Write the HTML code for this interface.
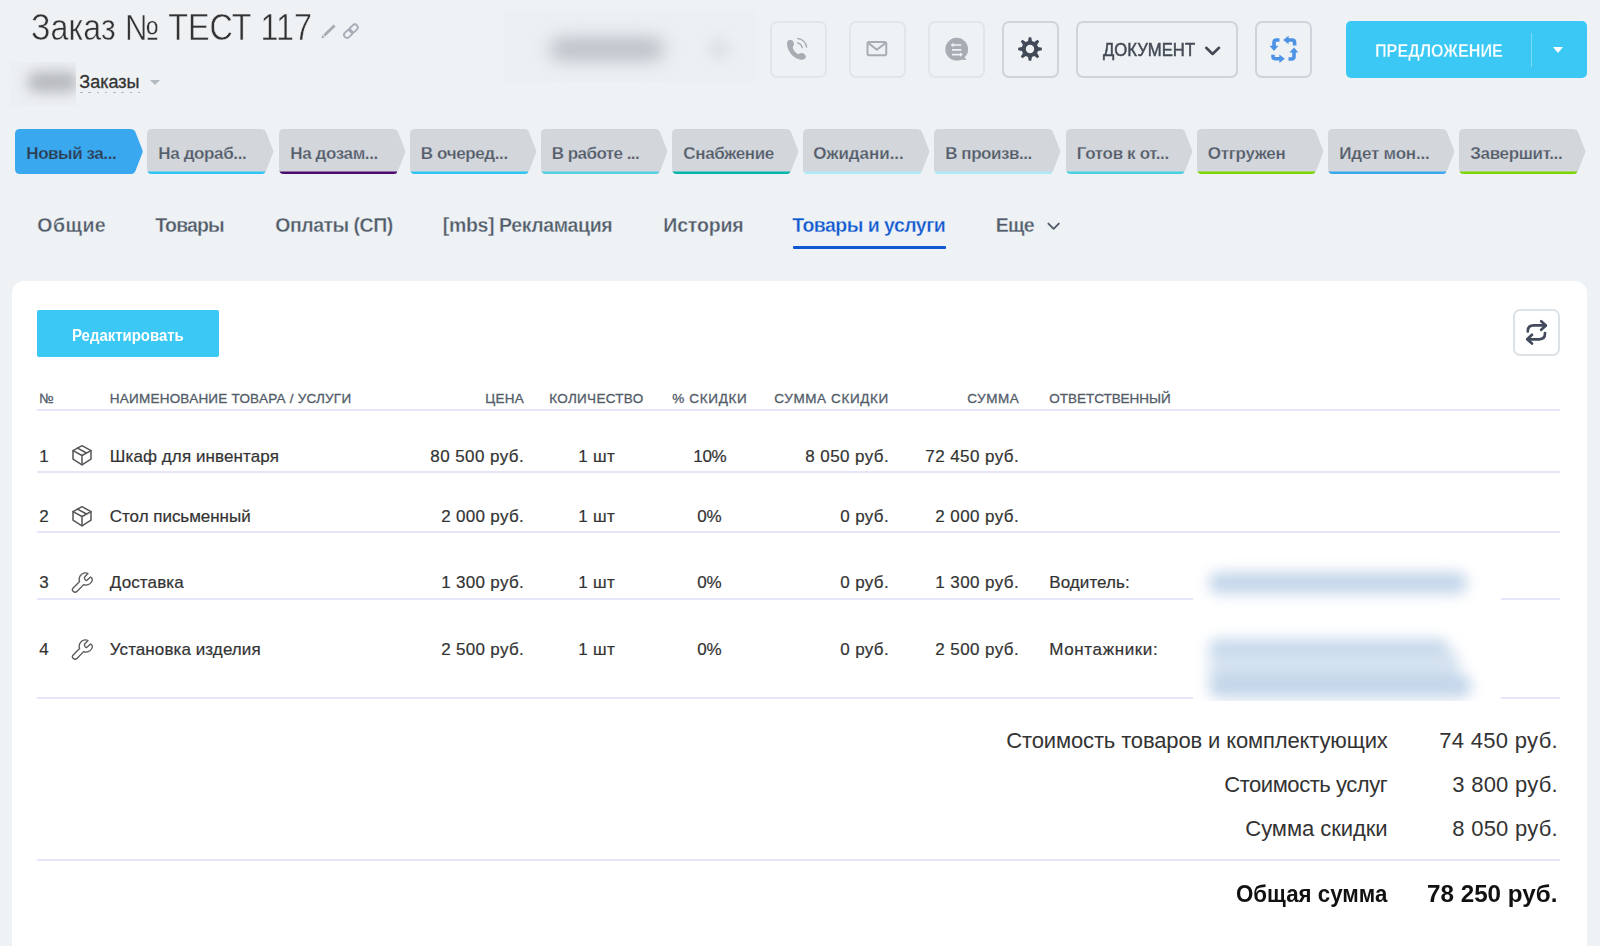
<!DOCTYPE html>
<html lang="ru">
<head>
<meta charset="utf-8">
<title>Заказ № ТЕСТ 117</title>
<style>
*{box-sizing:border-box;margin:0;padding:0}
html,body{width:1600px;height:946px;overflow:hidden}
body{background:#eef2f5;font-family:"Liberation Sans",sans-serif;color:#333;position:relative}
.abs{position:absolute}
.tx{white-space:nowrap}
.title{font-size:36.5px;line-height:44px;color:#333;-webkit-text-stroke:0.5px #eef2f5;margin-top:1px}
.sub{font-size:18px;line-height:24px;color:#333;-webkit-text-stroke:0.3px #333}
.subline{left:80px;top:92px;width:60px;height:1.4px;background:repeating-linear-gradient(90deg,#b3b7bd 0,#b3b7bd 2.6px,transparent 2.6px,transparent 8.3px)}
.blur1{left:28px;top:66px;width:48px;height:30px;background:#c3c6ca;filter:blur(6px);border-radius:10px;opacity:.8}
.caret{left:150px;top:80px;width:0;height:0;border:5px solid transparent;border-top:5px solid #b4bac1}
.hb{top:21px;height:57px;border:2px solid #e2e6ea;border-radius:7px}
.hb.d{border-color:#cfd4db}
.doct{font-size:17.5px;line-height:22px;color:#434a54;-webkit-text-stroke:0.45px #434a54}
.prim{left:1346px;top:21px;width:241px;height:57px;background:#3bc8f5;border-radius:5px}
.prim i{position:absolute;left:185px;top:12px;width:1px;height:34px;background:#7bdaf8}
.prim b{position:absolute;left:207px;top:26px;width:0;height:0;border:5.5px solid transparent;border-top:6px solid #fff}
.primt{font-size:17.5px;line-height:22px;color:#fff;font-weight:bold;-webkit-text-stroke:0.3px #3bc8f5}
.blurbox{left:505px;top:14px;width:250px;height:70px;background:#ecf0f3;filter:blur(4px)}
.blurtxt{left:548px;top:38px;width:115px;height:22px;background:#c5cad0;filter:blur(7px);border-radius:11px}
.blurtxt2{left:705px;top:36px;width:30px;height:22px;background:#e2e6ea;filter:blur(6px);border-radius:11px}
.stage{top:129px;height:45px;width:129px}
.stage svg{position:absolute;left:0;top:0}
.stg{font-size:17px;line-height:22px;font-weight:bold;color:#535c69;margin-top:0.4px;-webkit-text-stroke:0.25px #d3d7dc}
.stg.first{color:#2d3c4d;-webkit-text-stroke:0.25px #39a8ef}
.tab{font-size:19.5px;line-height:28px;margin-top:-0.4px;font-weight:bold;color:#525c69;-webkit-text-stroke:0.3px #eef2f5}
.tab.act{color:#1058d0}
.tabline{left:793px;top:246px;width:153px;height:3px;background:#1058d0;border-radius:1px}
.panel{left:12px;top:281px;width:1575px;height:700px;background:#fff;border-radius:12px}
.edit{left:37px;top:310px;width:182px;height:47.4px;background:#3bc8f5;border-radius:2px}
.editt{color:#fff;font-weight:bold;font-size:16px;line-height:20px;margin-top:1px}
.rbtn{left:1513px;top:309px;width:47px;height:47px;border:2px solid #dde2e7;border-radius:7px;background:#fff}
.rbtn svg{position:absolute;left:10px;top:9px}
.th{font-size:13.5px;line-height:16px;color:#525c69;text-transform:uppercase;-webkit-text-stroke:0.3px #525c69}
.hl{left:37px;width:1523px;height:2px;background:#e6e6fa}
.td{font-size:17px;line-height:22px;color:#333;margin-top:1.2px;-webkit-text-stroke:0.2px #333}
.tot{font-size:22px;line-height:26px;color:#333}
.tot.b{font-weight:bold;color:#111;font-size:23.5px}
</style>
</head>
<body>
<svg class="abs" style="left:316px;top:20px" width="48" height="24" viewBox="316 20 48 24"><g stroke="#a7adb4" fill="none" stroke-linecap="butt"><line x1="324.2" y1="35.4" x2="334.6" y2="25.4" stroke-width="2.8"/><path d="M321.4,38.2 L322.3,35 L324.8,37.4 Z" fill="#a7adb4" stroke="none"/><rect x="-4.6" y="-3" width="9.2" height="6" rx="3" transform="translate(348.2,33.8) rotate(-43)" stroke-width="1.8"/><rect x="-4.6" y="-3" width="9.2" height="6" rx="3" transform="translate(353.6,28.6) rotate(-43)" stroke-width="1.8"/></g></svg>
<div class="abs" style="left:10px;top:62px;width:66.4px;height:44px;background:#edf0f3;overflow:hidden"><div class="abs" style="left:18px;top:10px;width:50px;height:20px;background:#b4b7bb;filter:blur(7px);border-radius:8px"></div></div>
<div class="abs subline"></div>
<div class="abs caret"></div>

<div class="abs" style="left:505px;top:9.5px;width:252px;height:72px;background:#ecf0f3;overflow:hidden"><div class="abs" style="left:45px;top:28px;width:114px;height:22px;background:#b9bec5;filter:blur(9px);border-radius:11px"></div><div class="abs" style="left:203px;top:28px;width:22px;height:22px;background:#dfe3e7;filter:blur(6px);border-radius:11px"></div></div>

<div class="abs hb" style="left:770px;width:57px"></div>
<svg class="abs" style="left:785px;top:37px" width="24" height="24" viewBox="785 37 24 24"><path d="M790.4,39.8 C788.5,39.8 787,41.5 787,43.5 C787,51 793,58.5 801,59.8 C803.5,60.2 806,58.5 806,56.5 C806,55 804,53.5 802.2,53 C800.5,52.6 799.5,53.8 798,54 C795.5,53 793,49.5 792.8,47.5 C792.8,46.3 794,45.5 794,44 C794,42 792.5,39.8 790.4,39.8 Z" fill="#a8adb4"/><path d="M797.8,38.6 A10.2,10.2 0 0 1 806.6,47 M797.6,42.9 A6,6 0 0 1 802.2,47.4" fill="none" stroke="#a8adb4" stroke-width="1.5" stroke-linecap="round"/></svg>
<div class="abs hb" style="left:849px;width:57px"></div>
<svg class="abs" style="left:865px;top:39px" width="24" height="20" viewBox="865 39 24 20"><rect x="867.5" y="42" width="18.8" height="13.2" rx="1.8" fill="none" stroke="#a8adb4" stroke-width="2"/><path d="M867.8,42.6 L876.9,49.8 L886,42.6" fill="none" stroke="#a8adb4" stroke-width="2" stroke-linejoin="round"/></svg>
<div class="abs hb" style="left:928px;width:57px"></div>
<svg class="abs" style="left:944px;top:37px" width="26" height="26" viewBox="944 37 26 26"><circle cx="956.7" cy="49.2" r="11.4" fill="#a8adb4"/><path d="M962,55 L966.8,60 L960,59.5 Z" fill="#a8adb4"/><g stroke="#eef2f5" stroke-width="1.7" fill="none"><path d="M952.6,45 H961.2 M952,49.8 H961.4 M952,54.6 H960.6"/></g><path d="M950.6,45 L953.6,42.8 V47.2 Z M963,54.6 L960,52.4 V56.8 Z" fill="#eef2f5"/></svg>
<div class="abs hb d" style="left:1002px;width:57px"></div>
<svg class="abs" style="left:1017.2px;top:36.4px" width="26" height="26" viewBox="1017.2 36.4 26 26"><path fill-rule="evenodd" d="M1028.23,41.34 L1029.01,37.56 L1031.39,37.56 L1032.17,41.34 L1034.51,42.30 L1037.73,40.19 L1039.41,41.87 L1037.30,45.09 L1038.26,47.43 L1042.04,48.21 L1042.04,50.59 L1038.26,51.37 L1037.30,53.71 L1039.41,56.93 L1037.73,58.61 L1034.51,56.50 L1032.17,57.46 L1031.39,61.24 L1029.01,61.24 L1028.23,57.46 L1025.89,56.50 L1022.67,58.61 L1020.99,56.93 L1023.10,53.71 L1022.14,51.37 L1018.36,50.59 L1018.36,48.21 L1022.14,47.43 L1023.10,45.09 L1020.99,41.87 L1022.67,40.19 L1025.89,42.30 Z M1034.40,49.4 A4.2,4.2 0 1 0 1026.00,49.4 A4.2,4.2 0 1 0 1034.40,49.4 Z" fill="#424a57"/></svg>
<div class="abs hb d" style="left:1076px;width:162px"></div>
<div class="abs hb d" style="left:1255px;width:57px"></div>
<svg class="abs" style="left:1269px;top:35px" width="30" height="28" viewBox="1269 35 30 28"><g fill="none" stroke="#4c93e6" stroke-width="3.6"><path d="M1279.5,40 H1276.5 Q1274,40 1274,42.5 V46.5"/><path d="M1288,40 H1292 Q1294.6,40 1294.6,42.5 V45.5"/><path d="M1294,52 V56.5 Q1294,59 1291.5,59 H1288.5"/><path d="M1273,54.8 V56.5 Q1273,58.8 1275.5,58.8 H1280"/></g><g fill="#4c93e6"><path d="M1269.6,45.8 H1278.4 L1274,51 Z"/><path d="M1288.6,35.8 V44.2 L1283.2,40 Z"/><path d="M1289.4,52.6 H1298.4 L1294,47.6 Z"/><path d="M1279.4,54.6 V63 L1284.8,58.8 Z"/></g></svg>
<svg class="abs" style="left:1202px;top:44px" width="22" height="14" viewBox="1202 44 22 14"><path d="M1206.2,47.8 L1212.6,54 L1219,47.8" fill="none" stroke="#434a54" stroke-width="2.6" stroke-linecap="round" stroke-linejoin="round"/></svg>
<div class="abs prim"><i></i><b></b></div>

<div class="abs stage" style="left:15.3px"><svg width="129" height="45" viewBox="0 0 129 45"><path d="M5,0 H116 Q119,0 120.2,2.6 L127.4,21 Q128,22.5 127.4,24 L120.2,42.4 Q119,45 116,45 H5 Q0,45 0,40 V5 Q0,0 5,0 Z" fill="#39a8ef"/></svg></div>
<div class="abs stage" style="left:147px"><svg width="129" height="45" viewBox="0 0 129 45"><defs><clipPath id="sc1"><path d="M5,0 H114.6 Q117.6,0 118.8,2.6 L126,21 Q126.6,22.5 126,24 L118.8,42.4 Q117.6,45 114.6,45 H5 Q0,45 0,40 V5 Q0,0 5,0 Z"/></clipPath></defs><path d="M5,0 H114.6 Q117.6,0 118.8,2.6 L126,21 Q126.6,22.5 126,24 L118.8,42.4 Q117.6,45 114.6,45 H5 Q0,45 0,40 V5 Q0,0 5,0 Z" fill="#d3d7dc"/><rect x="0" y="42.5" width="118" height="3" fill="#2fc6f6" clip-path="url(#sc1)"/></svg></div>
<div class="abs stage" style="left:278.5px"><svg width="129" height="45" viewBox="0 0 129 45"><defs><clipPath id="sc2"><path d="M5,0 H114.6 Q117.6,0 118.8,2.6 L126,21 Q126.6,22.5 126,24 L118.8,42.4 Q117.6,45 114.6,45 H5 Q0,45 0,40 V5 Q0,0 5,0 Z"/></clipPath></defs><path d="M5,0 H114.6 Q117.6,0 118.8,2.6 L126,21 Q126.6,22.5 126,24 L118.8,42.4 Q117.6,45 114.6,45 H5 Q0,45 0,40 V5 Q0,0 5,0 Z" fill="#d3d7dc"/><rect x="0" y="42.5" width="118" height="3" fill="#4b0a6e" clip-path="url(#sc2)"/></svg></div>
<div class="abs stage" style="left:409.5px"><svg width="129" height="45" viewBox="0 0 129 45"><defs><clipPath id="sc3"><path d="M5,0 H114.6 Q117.6,0 118.8,2.6 L126,21 Q126.6,22.5 126,24 L118.8,42.4 Q117.6,45 114.6,45 H5 Q0,45 0,40 V5 Q0,0 5,0 Z"/></clipPath></defs><path d="M5,0 H114.6 Q117.6,0 118.8,2.6 L126,21 Q126.6,22.5 126,24 L118.8,42.4 Q117.6,45 114.6,45 H5 Q0,45 0,40 V5 Q0,0 5,0 Z" fill="#d3d7dc"/><rect x="0" y="42.5" width="118" height="3" fill="#2fc6f6" clip-path="url(#sc3)"/></svg></div>
<div class="abs stage" style="left:540.5px"><svg width="129" height="45" viewBox="0 0 129 45"><defs><clipPath id="sc4"><path d="M5,0 H114.6 Q117.6,0 118.8,2.6 L126,21 Q126.6,22.5 126,24 L118.8,42.4 Q117.6,45 114.6,45 H5 Q0,45 0,40 V5 Q0,0 5,0 Z"/></clipPath></defs><path d="M5,0 H114.6 Q117.6,0 118.8,2.6 L126,21 Q126.6,22.5 126,24 L118.8,42.4 Q117.6,45 114.6,45 H5 Q0,45 0,40 V5 Q0,0 5,0 Z" fill="#d3d7dc"/><rect x="0" y="42.5" width="118" height="3" fill="#55d0e0" clip-path="url(#sc4)"/></svg></div>
<div class="abs stage" style="left:672px"><svg width="129" height="45" viewBox="0 0 129 45"><defs><clipPath id="sc5"><path d="M5,0 H114.6 Q117.6,0 118.8,2.6 L126,21 Q126.6,22.5 126,24 L118.8,42.4 Q117.6,45 114.6,45 H5 Q0,45 0,40 V5 Q0,0 5,0 Z"/></clipPath></defs><path d="M5,0 H114.6 Q117.6,0 118.8,2.6 L126,21 Q126.6,22.5 126,24 L118.8,42.4 Q117.6,45 114.6,45 H5 Q0,45 0,40 V5 Q0,0 5,0 Z" fill="#d3d7dc"/><rect x="0" y="42.5" width="118" height="3" fill="#05b5ab" clip-path="url(#sc5)"/></svg></div>
<div class="abs stage" style="left:802.5px"><svg width="129" height="45" viewBox="0 0 129 45"><defs><clipPath id="sc6"><path d="M5,0 H114.6 Q117.6,0 118.8,2.6 L126,21 Q126.6,22.5 126,24 L118.8,42.4 Q117.6,45 114.6,45 H5 Q0,45 0,40 V5 Q0,0 5,0 Z"/></clipPath></defs><path d="M5,0 H114.6 Q117.6,0 118.8,2.6 L126,21 Q126.6,22.5 126,24 L118.8,42.4 Q117.6,45 114.6,45 H5 Q0,45 0,40 V5 Q0,0 5,0 Z" fill="#d3d7dc"/><rect x="0" y="42.5" width="118" height="3" fill="#ace9fb" clip-path="url(#sc6)"/></svg></div>
<div class="abs stage" style="left:934px"><svg width="129" height="45" viewBox="0 0 129 45"><defs><clipPath id="sc7"><path d="M5,0 H114.6 Q117.6,0 118.8,2.6 L126,21 Q126.6,22.5 126,24 L118.8,42.4 Q117.6,45 114.6,45 H5 Q0,45 0,40 V5 Q0,0 5,0 Z"/></clipPath></defs><path d="M5,0 H114.6 Q117.6,0 118.8,2.6 L126,21 Q126.6,22.5 126,24 L118.8,42.4 Q117.6,45 114.6,45 H5 Q0,45 0,40 V5 Q0,0 5,0 Z" fill="#d3d7dc"/><rect x="0" y="42.5" width="118" height="3" fill="#ace9fb" clip-path="url(#sc7)"/></svg></div>
<div class="abs stage" style="left:1065.5px"><svg width="129" height="45" viewBox="0 0 129 45"><defs><clipPath id="sc8"><path d="M5,0 H114.6 Q117.6,0 118.8,2.6 L126,21 Q126.6,22.5 126,24 L118.8,42.4 Q117.6,45 114.6,45 H5 Q0,45 0,40 V5 Q0,0 5,0 Z"/></clipPath></defs><path d="M5,0 H114.6 Q117.6,0 118.8,2.6 L126,21 Q126.6,22.5 126,24 L118.8,42.4 Q117.6,45 114.6,45 H5 Q0,45 0,40 V5 Q0,0 5,0 Z" fill="#d3d7dc"/><rect x="0" y="42.5" width="118" height="3" fill="#47d1e2" clip-path="url(#sc8)"/></svg></div>
<div class="abs stage" style="left:1196.5px"><svg width="129" height="45" viewBox="0 0 129 45"><defs><clipPath id="sc9"><path d="M5,0 H114.6 Q117.6,0 118.8,2.6 L126,21 Q126.6,22.5 126,24 L118.8,42.4 Q117.6,45 114.6,45 H5 Q0,45 0,40 V5 Q0,0 5,0 Z"/></clipPath></defs><path d="M5,0 H114.6 Q117.6,0 118.8,2.6 L126,21 Q126.6,22.5 126,24 L118.8,42.4 Q117.6,45 114.6,45 H5 Q0,45 0,40 V5 Q0,0 5,0 Z" fill="#d3d7dc"/><rect x="0" y="42.5" width="118" height="3" fill="#7bd500" clip-path="url(#sc9)"/></svg></div>
<div class="abs stage" style="left:1328px"><svg width="129" height="45" viewBox="0 0 129 45"><defs><clipPath id="sc10"><path d="M5,0 H114.6 Q117.6,0 118.8,2.6 L126,21 Q126.6,22.5 126,24 L118.8,42.4 Q117.6,45 114.6,45 H5 Q0,45 0,40 V5 Q0,0 5,0 Z"/></clipPath></defs><path d="M5,0 H114.6 Q117.6,0 118.8,2.6 L126,21 Q126.6,22.5 126,24 L118.8,42.4 Q117.6,45 114.6,45 H5 Q0,45 0,40 V5 Q0,0 5,0 Z" fill="#d3d7dc"/><rect x="0" y="42.5" width="118" height="3" fill="#39a8ef" clip-path="url(#sc10)"/></svg></div>
<div class="abs stage" style="left:1459.3px"><svg width="129" height="45" viewBox="0 0 129 45"><defs><clipPath id="sc11"><path d="M5,0 H114.6 Q117.6,0 118.8,2.6 L126,21 Q126.6,22.5 126,24 L118.8,42.4 Q117.6,45 114.6,45 H5 Q0,45 0,40 V5 Q0,0 5,0 Z"/></clipPath></defs><path d="M5,0 H114.6 Q117.6,0 118.8,2.6 L126,21 Q126.6,22.5 126,24 L118.8,42.4 Q117.6,45 114.6,45 H5 Q0,45 0,40 V5 Q0,0 5,0 Z" fill="#d3d7dc"/><rect x="0" y="42.5" width="118" height="3" fill="#7bd500" clip-path="url(#sc11)"/></svg></div>

<svg class="abs" style="left:1044px;top:219px" width="20" height="14" viewBox="1044 219 20 14"><path d="M1048.4,223.6 L1053.6,228.8 L1058.8,223.6" fill="none" stroke="#525c69" stroke-width="1.9" stroke-linecap="round" stroke-linejoin="round"/></svg>
<div class="abs tabline"></div>
<div class="abs panel"></div>
<div class="abs edit"></div>
<div class="abs rbtn"></div>
<svg class="abs" style="left:1520px;top:316px" width="32" height="32" viewBox="1520 316 32 32"><g fill="none" stroke="#424a5b" stroke-width="2.7" stroke-linecap="round" stroke-linejoin="round"><path d="M1527.8,331.4 V331 Q1527.8,325.4 1533.6,325.4 H1545.4"/><path d="M1541.2,321.3 L1545.9,325.4 L1541.2,329.8"/><path d="M1545,333 V333.6 Q1545,339.3 1539.2,339.3 H1527.6"/><path d="M1532,334.8 L1527.2,339.3 L1532,343.6"/></g></svg>

<div class="abs hl" style="top:409px"></div>
<div class="abs hl" style="top:470.5px"></div>
<div class="abs hl" style="top:531px"></div>
<div class="abs hl" style="top:597.5px"></div>
<div class="abs hl" style="top:696.5px"></div>
<div class="abs hl" style="top:859px"></div>

<svg class="abs" style="left:71px;top:443.2px" width="22" height="24" viewBox="-11 -12 22 24"><g fill="none" stroke="#555" stroke-width="1.5" stroke-linejoin="round" stroke-linecap="round"><path d="M0,-9.3 L9,-4.4 V4.2 L0,9.8 L-9,4.2 V-4.4 Z"/><path d="M-9,-4.4 L0,0.5 L9,-4.4 M0,0.5 V9.8 M-4.5,-6.9 L4.5,-2"/></g></svg>
<svg class="abs" style="left:71px;top:504.29999999999995px" width="22" height="24" viewBox="-11 -12 22 24"><g fill="none" stroke="#555" stroke-width="1.5" stroke-linejoin="round" stroke-linecap="round"><path d="M0,-9.3 L9,-4.4 V4.2 L0,9.8 L-9,4.2 V-4.4 Z"/><path d="M-9,-4.4 L0,0.5 L9,-4.4 M0,0.5 V9.8 M-4.5,-6.9 L4.5,-2"/></g></svg>
<svg class="abs" style="left:71px;top:571.0px" width="23" height="23" viewBox="-1 -1 23 23"><path d="M1.2,16 L7.6,9.6 C6.2,6 8.5,1.5 12.5,0.9 C14,0.7 15.2,1 16,1.5 L12.6,4.9 C12.2,6.5 13,8.2 14.6,8.6 L18.6,5 C20.5,6 20.8,8 19.5,10 C18,12.5 14.5,13.8 11.6,12.6 L5.2,19.2 C4,20.4 2.2,20.4 1.1,19.3 C0,18.2 0,17.2 1.2,16 Z" fill="none" stroke="#5a5a5a" stroke-width="1.35" stroke-linejoin="round"/></svg>
<svg class="abs" style="left:71px;top:637.7px" width="23" height="23" viewBox="-1 -1 23 23"><path d="M1.2,16 L7.6,9.6 C6.2,6 8.5,1.5 12.5,0.9 C14,0.7 15.2,1 16,1.5 L12.6,4.9 C12.2,6.5 13,8.2 14.6,8.6 L18.6,5 C20.5,6 20.8,8 19.5,10 C18,12.5 14.5,13.8 11.6,12.6 L5.2,19.2 C4,20.4 2.2,20.4 1.1,19.3 C0,18.2 0,17.2 1.2,16 Z" fill="none" stroke="#5a5a5a" stroke-width="1.35" stroke-linejoin="round"/></svg>
<div class="abs" style="left:1193px;top:541px;width:308px;height:160px;background:#fff;overflow:hidden">
<div class="abs" style="left:0;top:0;width:308px;height:170px;filter:blur(7px)">
<div class="abs" style="left:16px;top:31px;width:258px;height:22px;background:#c4d6ea;border-radius:9px"></div>
<div class="abs" style="left:16px;top:98px;width:240px;height:22px;background:#c4d6ea;border-radius:9px"></div>
<div class="abs" style="left:16px;top:112px;width:250px;height:30px;background:#d6e3f0"></div>
<div class="abs" style="left:16px;top:133px;width:262px;height:24px;background:#c4d6ea;border-radius:9px"></div>
</div></div>
<div class="abs tx title" style="left:30.6px;top:5.0px;transform:scaleX(0.8847);transform-origin:0 50%">Заказ № ТЕСТ 117</div>
<div class="abs tx sub" style="left:79.3px;top:70.0px">Заказы</div>
<div class="abs tx doct" style="left:1102.9px;top:39.0px;transform:scaleX(0.9542);transform-origin:0 50%">ДОКУМЕНТ</div>
<div class="abs tx primt" style="left:1375.3px;top:39.5px;transform:scaleX(0.9231);transform-origin:0 50%">ПРЕДЛОЖЕНИЕ</div>
<div class="abs tx stg first" style="left:26.3px;top:142.5px;letter-spacing:-0.43px">Новый за...</div>
<div class="abs tx stg" style="left:158.3px;top:142.5px;letter-spacing:-0.37px">На дораб...</div>
<div class="abs tx stg" style="left:290.3px;top:142.5px;letter-spacing:-0.39px">На дозам...</div>
<div class="abs tx stg" style="left:420.8px;top:142.5px;letter-spacing:-0.37px">В очеред...</div>
<div class="abs tx stg" style="left:551.8px;top:142.5px;letter-spacing:-0.55px">В работе ...</div>
<div class="abs tx stg" style="left:683.3px;top:142.5px;letter-spacing:-0.35px">Снабжение</div>
<div class="abs tx stg" style="left:813.3px;top:142.5px;letter-spacing:-0.05px">Ожидани...</div>
<div class="abs tx stg" style="left:945.3px;top:142.5px;letter-spacing:-0.47px">В произв...</div>
<div class="abs tx stg" style="left:1076.8px;top:142.5px;letter-spacing:-0.35px">Готов к от...</div>
<div class="abs tx stg" style="left:1207.8px;top:142.5px;letter-spacing:-0.3px">Отгружен</div>
<div class="abs tx stg" style="left:1339.3px;top:142.5px;letter-spacing:-0.21px">Идет мон...</div>
<div class="abs tx stg" style="left:1470.3px;top:142.5px;letter-spacing:-0.34px">Завершит...</div>
<div class="abs tx tab" style="left:37.3px;top:211.5px;letter-spacing:0.48px">Общие</div>
<div class="abs tx tab" style="left:155.3px;top:211.5px;letter-spacing:-0.87px">Товары</div>
<div class="abs tx tab" style="left:275.3px;top:211.5px;letter-spacing:-0.5px">Оплаты (СП)</div>
<div class="abs tx tab" style="left:442.8px;top:211.5px;letter-spacing:-0.37px">[mbs] Рекламация</div>
<div class="abs tx tab" style="left:663.3px;top:211.5px;letter-spacing:-0.16px">История</div>
<div class="abs tx tab act" style="left:792.3px;top:211.5px;letter-spacing:-0.53px">Товары и услуги</div>
<div class="abs tx tab" style="left:995.8px;top:211.5px;letter-spacing:-0.71px">Еще</div>
<div class="abs tx editt" style="left:71.8px;top:325.0px;transform:scaleX(0.9344);transform-origin:0 50%">Редактировать</div>
<div class="abs tx th" style="left:39.3px;top:390.5px;letter-spacing:1.17px">№</div>
<div class="abs tx th" style="left:109.8px;top:390.5px;letter-spacing:0.23px">НАИМЕНОВАНИЕ ТОВАРА / УСЛУГИ</div>
<div class="abs tx th" style="left:485.3px;top:390.5px;letter-spacing:0.22px">ЦЕНА</div>
<div class="abs tx th" style="left:549.3px;top:390.5px;letter-spacing:0.3px">КОЛИЧЕСТВО</div>
<div class="abs tx th" style="left:672.3px;top:390.5px;letter-spacing:0.66px">% СКИДКИ</div>
<div class="abs tx th" style="left:774.3px;top:390.5px;letter-spacing:0.61px">СУММА СКИДКИ</div>
<div class="abs tx th" style="left:967.3px;top:390.5px;letter-spacing:0.51px">СУММА</div>
<div class="abs tx th" style="left:1049.3px;top:390.5px;letter-spacing:-0.03px">ОТВЕТСТВЕННЫЙ</div>
<div class="abs tx td" style="left:39.3px;top:445.0px;letter-spacing:0.43px">1</div>
<div class="abs tx td" style="left:109.8px;top:445.0px;letter-spacing:0.1px">Шкаф для инвентаря</div>
<div class="abs tx td" style="left:430.3px;top:445.0px;letter-spacing:0.43px">80 500 руб.</div>
<div class="abs tx td" style="left:578.3px;top:445.0px;letter-spacing:0.26px">1 шт</div>
<div class="abs tx td" style="left:693.3px;top:445.0px;letter-spacing:-0.32px">10%</div>
<div class="abs tx td" style="left:805.3px;top:445.0px;letter-spacing:0.41px">8 050 руб.</div>
<div class="abs tx td" style="left:925.3px;top:445.0px;letter-spacing:0.43px">72 450 руб.</div>
<div class="abs tx td" style="left:39.3px;top:505.0px;letter-spacing:0.43px">2</div>
<div class="abs tx td" style="left:109.8px;top:505.0px;letter-spacing:-0.03px">Стол письменный</div>
<div class="abs tx td" style="left:441.3px;top:505.0px;letter-spacing:0.3px">2 000 руб.</div>
<div class="abs tx td" style="left:578.3px;top:505.0px;letter-spacing:0.26px">1 шт</div>
<div class="abs tx td" style="left:697.3px;top:505.0px;letter-spacing:-0.18px">0%</div>
<div class="abs tx td" style="left:840.3px;top:505.0px;letter-spacing:0.36px">0 руб.</div>
<div class="abs tx td" style="left:935.3px;top:505.0px;letter-spacing:0.41px">2 000 руб.</div>
<div class="abs tx td" style="left:39.3px;top:571.0px;letter-spacing:0.43px">3</div>
<div class="abs tx td" style="left:109.8px;top:571.0px;letter-spacing:0.13px">Доставка</div>
<div class="abs tx td" style="left:441.3px;top:571.0px;letter-spacing:0.3px">1 300 руб.</div>
<div class="abs tx td" style="left:578.3px;top:571.0px;letter-spacing:0.26px">1 шт</div>
<div class="abs tx td" style="left:697.3px;top:571.0px;letter-spacing:-0.18px">0%</div>
<div class="abs tx td" style="left:840.3px;top:571.0px;letter-spacing:0.36px">0 руб.</div>
<div class="abs tx td" style="left:935.3px;top:571.0px;letter-spacing:0.41px">1 300 руб.</div>
<div class="abs tx td" style="left:1049.3px;top:571.0px;letter-spacing:0.07px">Водитель:</div>
<div class="abs tx td" style="left:39.3px;top:638.0px;letter-spacing:0.93px">4</div>
<div class="abs tx td" style="left:109.8px;top:638.0px;letter-spacing:0.09px">Установка изделия</div>
<div class="abs tx td" style="left:441.3px;top:638.0px;letter-spacing:0.3px">2 500 руб.</div>
<div class="abs tx td" style="left:578.3px;top:638.0px;letter-spacing:0.26px">1 шт</div>
<div class="abs tx td" style="left:697.3px;top:638.0px;letter-spacing:-0.18px">0%</div>
<div class="abs tx td" style="left:840.3px;top:638.0px;letter-spacing:0.36px">0 руб.</div>
<div class="abs tx td" style="left:935.3px;top:638.0px;letter-spacing:0.41px">2 500 руб.</div>
<div class="abs tx td" style="left:1049.3px;top:638.0px;letter-spacing:0.62px">Монтажники:</div>
<div class="abs tx tot" style="left:1006.3px;top:728.0px;letter-spacing:-0.14px">Стоимость товаров и комплектующих</div>
<div class="abs tx tot" style="left:1439.3px;top:728.0px;letter-spacing:0.3px">74 450 руб.</div>
<div class="abs tx tot" style="left:1224.3px;top:772.0px;letter-spacing:-0.46px">Стоимость услуг</div>
<div class="abs tx tot" style="left:1452.3px;top:772.0px;letter-spacing:0.25px">3 800 руб.</div>
<div class="abs tx tot" style="left:1245.3px;top:816.0px;letter-spacing:-0.05px">Сумма скидки</div>
<div class="abs tx tot" style="left:1452.3px;top:816.0px;letter-spacing:0.25px">8 050 руб.</div>
<div class="abs tx tot b" style="left:1236.3px;top:881.0px;transform:scaleX(0.9483);transform-origin:0 50%">Общая сумма</div>
<div class="abs tx tot b" style="left:1427.3px;top:881.0px;transform:scaleX(1.0305);transform-origin:0 50%">78 250 руб.</div>
</body>
</html>
